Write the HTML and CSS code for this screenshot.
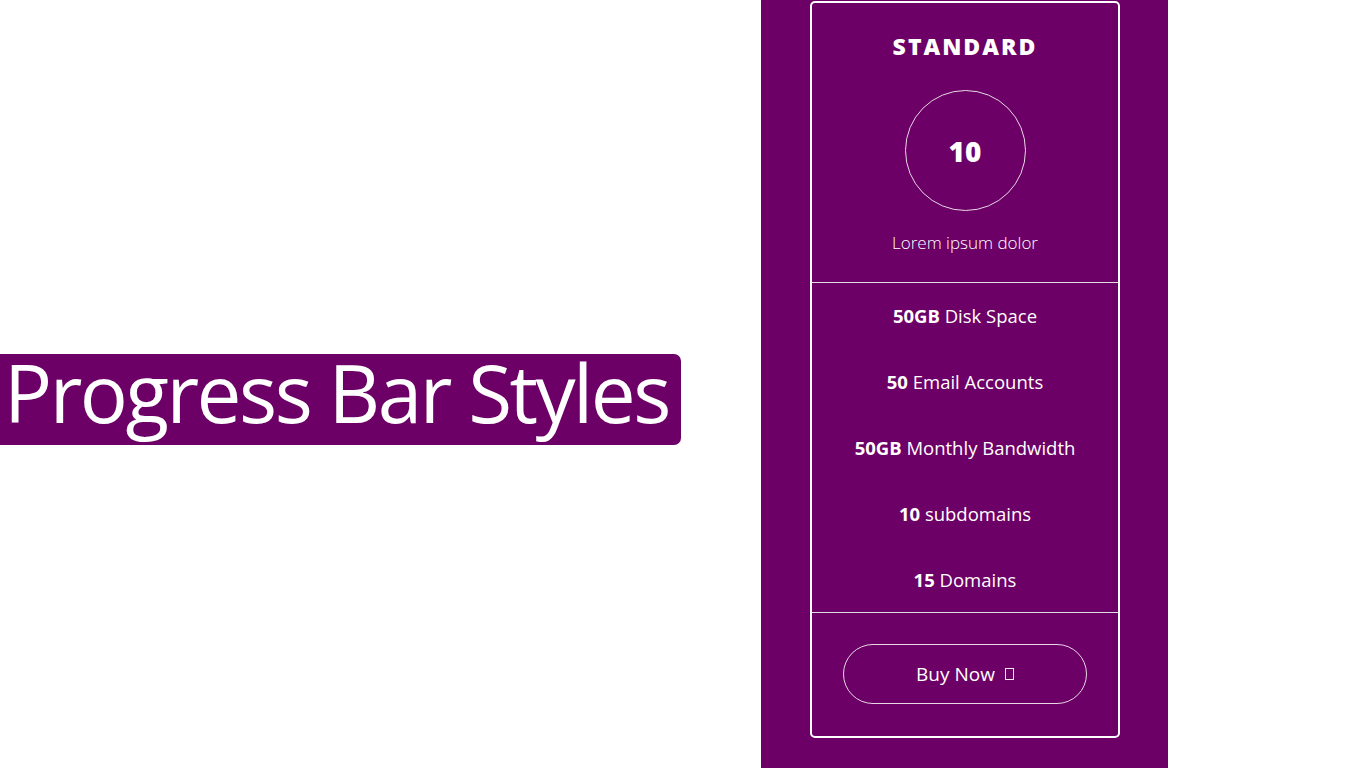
FILE: index.html
```html
<!DOCTYPE html>
<html>
<head>
<meta charset="utf-8">
<link rel="stylesheet" href="styles.css">
</head>
<body>
<div class="page">
  <div class="left">
    <h1 class="title"><span class="title-text">Progress Bar Styles</span></h1>
  </div>
  <div class="panel">
    <div class="card">
      <div class="card-top">
        <h2 class="plan">STANDARD</h2>
        <div class="circle">10</div>
        <p class="desc">Lorem ipsum dolor</p>
      </div>
      <ul class="features">
        <li><b>50GB</b> Disk Space</li>
        <li><b>50</b> Email Accounts</li>
        <li><b>50GB</b> Monthly Bandwidth</li>
        <li><b>10</b> subdomains</li>
        <li><b>15</b> Domains</li>
      </ul>
      <div class="card-bottom">
        <a class="buy" href="#">Buy Now <span class="tofu"></span></a>
      </div>
    </div>
  </div>
</div>
</body>
</html>
```

FILE: styles.css
```css
* { box-sizing: border-box; }
html, body { margin: 0; padding: 0; background: #fff; }
body { font-family: "Open Sans", "Noto Sans", sans-serif; }
.page { display: flex; width: 1366px; height: 768px; }
.left { width: 761px; padding-top: 354px; }
.title {
  margin: 0;
  display: block;
  background: #6c0066;
  color: #fff;
  font-family: "Open Sans", "Noto Sans", sans-serif;
  font-weight: 500;
  font-size: 80px;
  line-height: 75px;
  height: 91px;
  width: 681px;
  padding-left: 4px;
  border-radius: 0 7px 7px 0;
  white-space: nowrap;
  letter-spacing: -2.5px;
}
.title-text { display: inline-block; }
.panel { width: 407px; background: #6c0066; padding: 1px 0 0 49px; }
.card {
  width: 310px;
  height: 737px;
  border: 2px solid #fff;
  border-radius: 5px;
  color: #fff;
  display: flex;
  flex-direction: column;
}
.card-top {
  height: 280px;
  border-bottom: 1px solid #ddd;
  display: flex;
  flex-direction: column;
  align-items: center;
}
.plan {
  margin: 28px 0 0;
  font-size: 23px;
  line-height: 30px;
  font-weight: 800;
  letter-spacing: 2px;
}
.circle {
  margin-top: 29px;
  width: 121px;
  height: 121px;
  border: 1px solid #e8d8e6;
  border-radius: 50%;
  display: flex;
  align-items: center;
  justify-content: center;
  font-size: 28px;
  font-weight: 800;
}
.desc {
  margin: 20px 0 0;
  font-size: 17px;
  font-weight: 300;
  line-height: 24px;
}
.features {
  list-style: none;
  margin: 0;
  padding: 0;
  height: 330px;
  border-bottom: 1px solid #ddd;
}
.features li {
  height: 66px;
  padding-bottom: 2px;
  display: flex;
  align-items: center;
  justify-content: center;
  font-size: 18.5px;
  white-space: pre;
}
.features b { font-weight: 700; }
.card-bottom {
  flex: 1;
  display: flex;
  justify-content: center;
  padding-top: 31px;
}
.buy {
  width: 244px;
  height: 60px;
  border: 1px solid #e8d8e6;
  border-radius: 30px;
  color: #fff;
  text-decoration: none;
  font-size: 19px;
  display: flex;
  align-items: center;
  justify-content: center;
  gap: 10px;
}
.tofu {
  display: inline-block;
  width: 9px;
  height: 12px;
  border: 1px solid #f0e6ee;
}
```
